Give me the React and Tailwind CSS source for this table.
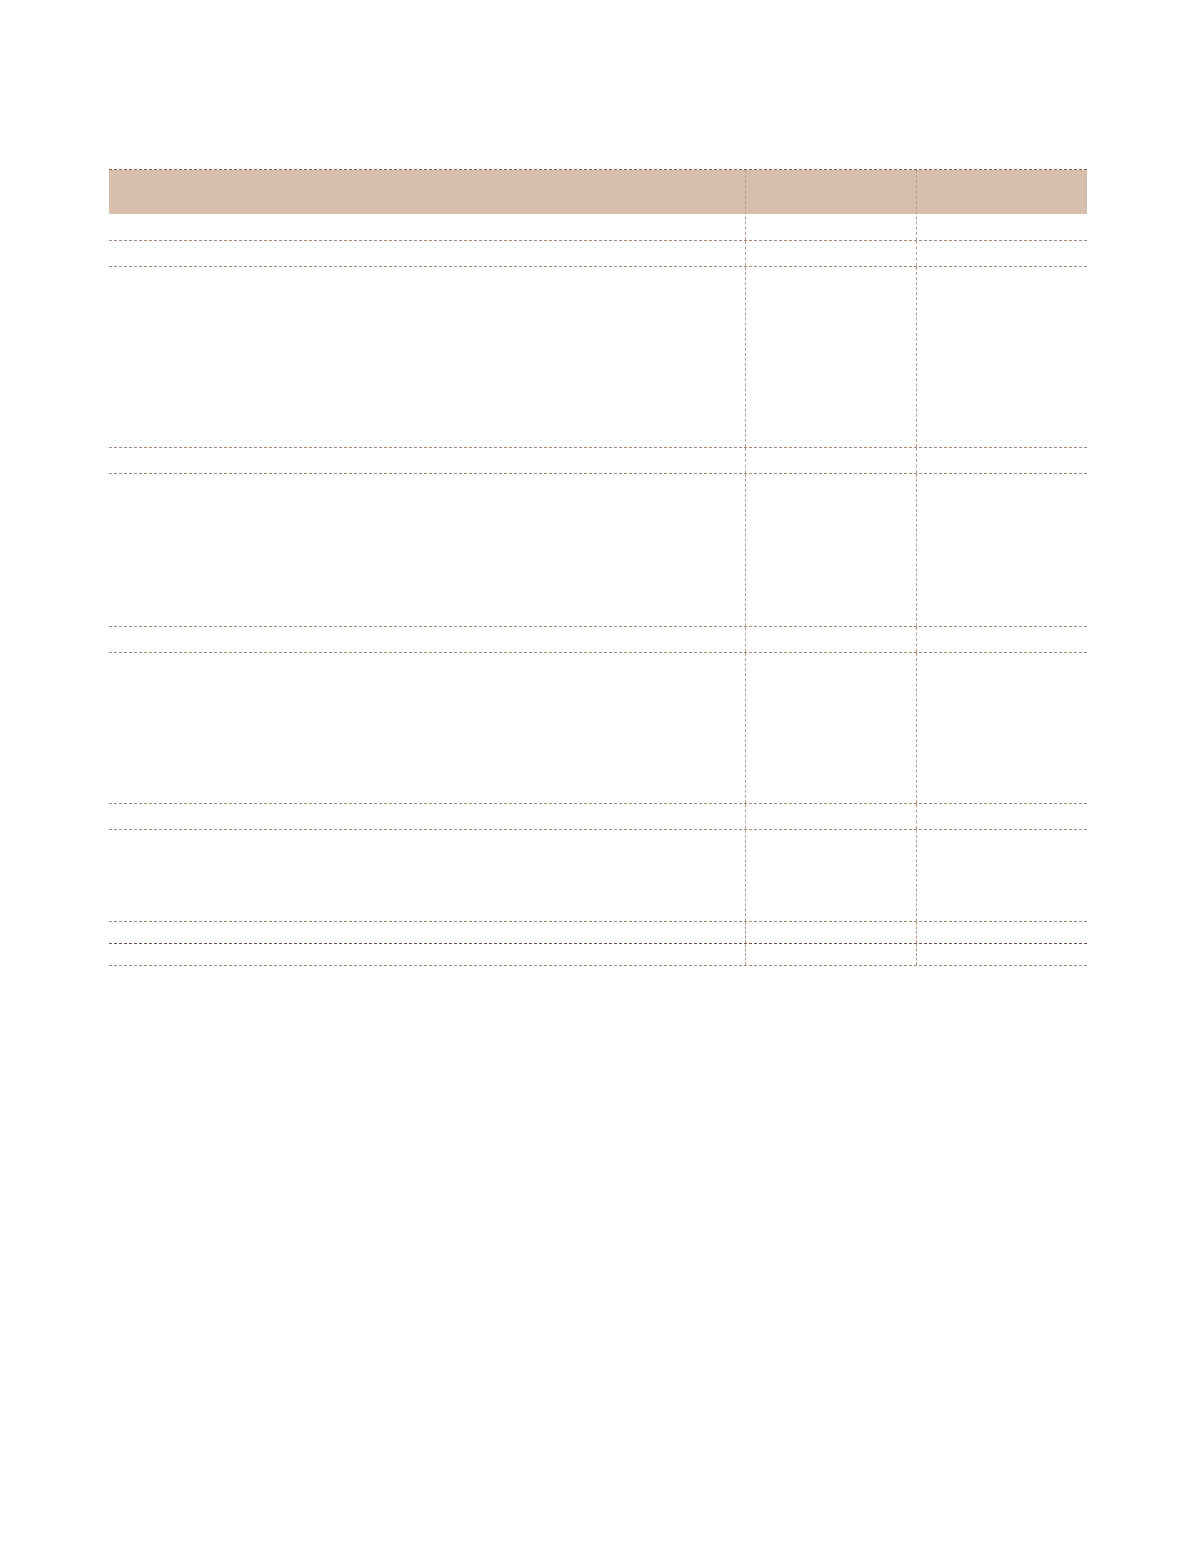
import React from "react";

const rows = [
  { h: "h-[26px]" },
  { h: "h-[181px]" },
  { h: "h-[26px]" },
  { h: "h-[153px]" },
  { h: "h-[26px]" },
  { h: "h-[151px]" },
  { h: "h-[26px]" },
  { h: "h-[92px]" },
  { h: "h-[22px]", dark: true },
  { h: "h-[22px]" },
];

function Row({ h, dark }) {
  return (
    <div
      className={`flex ${h} border-b border-dashed ${
        dark ? "border-b-[#6e5242]" : "border-b-[#a88b78]"
      }`}
    >
      <div className="w-[636px]" />
      <div className="w-[171px] border-l border-dashed border-l-[#b59e8e]" />
      <div className="w-[171px] border-l border-dashed border-l-[#b59e8e]" />
    </div>
  );
}

export default function App() {
  return (
    <div className="min-h-[1557px] w-[1194px] bg-white pt-[169px] font-['Liberation_Sans',sans-serif]">
      <div className="ml-[109px] w-[978px] border-t border-dashed border-t-[#7a5e4c]">
        <div className="flex h-[71px] border-b border-dashed border-b-[#a88b78]">
          <div className="w-[636px]">
            <div className="h-[44px] bg-[#d8bfad]" />
          </div>
          <div className="w-[171px] border-l border-dashed border-l-[#b59e8e] bg-[linear-gradient(#d8bfad_0_44px,transparent_44px)]" />
          <div className="w-[171px] border-l border-dashed border-l-[#b59e8e] bg-[linear-gradient(#d8bfad_0_44px,transparent_44px)]" />
        </div>
        {rows.map((r, i) => (
          <Row key={i} {...r} />
        ))}
      </div>
    </div>
  );
}
